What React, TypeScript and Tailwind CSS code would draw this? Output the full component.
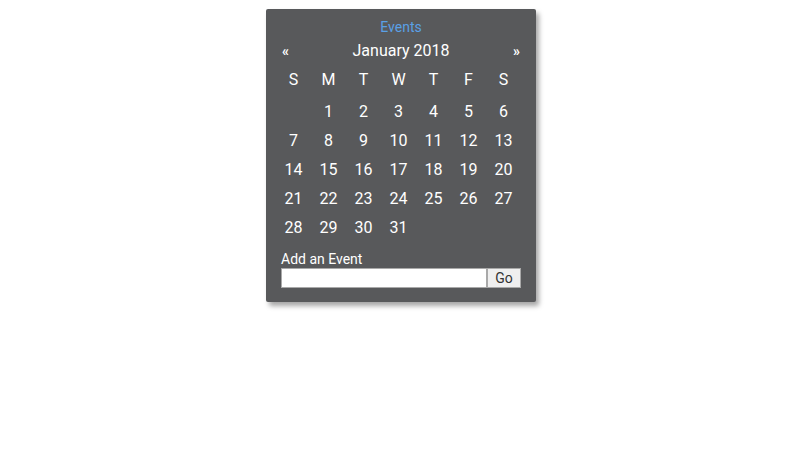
const days = ['S', 'M', 'T', 'W', 'T', 'F', 'S'];

function buildWeeks() {
  const cells: (number | null)[] = [null];
  for (let d = 1; d <= 31; d++) cells.push(d);
  while (cells.length % 7) cells.push(null);
  const weeks: (number | null)[][] = [];
  for (let i = 0; i < cells.length; i += 7) weeks.push(cells.slice(i, i + 7));
  return weeks;
}

export default function App() {
  const weeks = buildWeeks();
  return (
    <div className="min-h-screen bg-white flex justify-center pt-[9px] pl-[2px]" style={{ fontFamily: 'Roboto, "Liberation Sans", sans-serif' }}>
      <div className="w-[270px] h-[293px] bg-[#58595b] rounded-[2px] shadow-[3px_4px_5px_rgba(0,0,0,0.35)] px-[10px] pt-[9px] text-white">
        <div className="text-center text-[14px] leading-[18px] text-[#5aa0e6]">Events</div>
        <div className="flex items-center justify-between px-[6px] mt-[4px] h-[22px]">
          <span className="text-[14px] font-bold">«</span>
          <span className="text-[16px]">January 2018</span>
          <span className="text-[14px] font-bold">»</span>
        </div>
        <div className="grid grid-cols-7 w-[245px] mt-[6px] text-[16px] text-center">
          {days.map((d, i) => (
            <div key={i} className="h-[24px] leading-[24px]">{d}</div>
          ))}
        </div>
        <div className="w-[245px] mt-[5px] text-[16px] text-center">
          {weeks.map((w, i) => (
            <div key={i} className="grid grid-cols-7 h-[29px] leading-[29px]">
              {w.map((d, j) => (
                <div key={j}>{d ?? ''}</div>
              ))}
            </div>
          ))}
        </div>
        <div className="pl-[5px] w-[250px]">
          <div className="text-[14px] leading-[18px] mt-[8px]">Add an Event</div>
          <div className="flex h-[20px]">
            <input className="w-[206px] h-full bg-white border border-[#a9a9a9] outline-none" />
            <button className="w-[34px] h-full bg-[#efefef] border border-[#a9a9a9] text-[14px] text-[#333] leading-none">Go</button>
          </div>
        </div>
      </div>
    </div>
  );
}
